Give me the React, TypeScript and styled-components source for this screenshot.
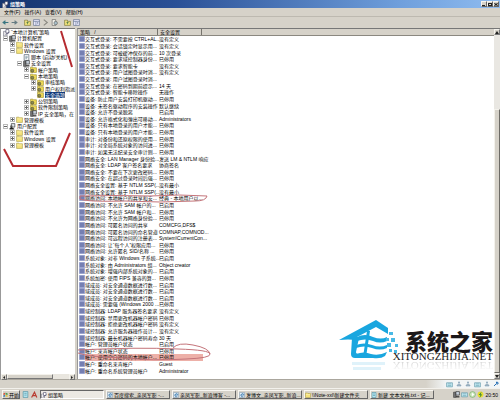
import React from "react";
import styled, { createGlobalStyle } from "styled-components";

const GlobalStyle = createGlobalStyle`
  * { box-sizing: border-box; }
  body { margin: 0; }
  button { font: inherit; color: inherit; border: 0; padding: 0; background: none; }
`;

const Desktop = styled.div`
  display: flex;
  flex-direction: column;
  height: 100vh;
  overflow: hidden;
  background: #d6d2c9;
  color: #000;
  font: 5px/6px "Liberation Sans", "Noto Sans CJK SC", sans-serif;
  white-space: nowrap;
`;

const TitleBar = styled.header`
  display: flex;
  align-items: center;
  justify-content: space-between;
  height: 8px;
  padding: 0 1px 0 2px;
  color: #fff;
  font-weight: bold;
  background: linear-gradient(90deg, #15356f 0%, #2a5096 35%, #6f9fdc 80%, #8fbcf0 100%);
`;

const Group = styled.div<{ $gap?: number }>`
  display: flex;
  align-items: center;
  gap: ${(p) => p.$gap ?? 1}px;
`;

const CaptionButton = styled.button`
  display: grid;
  place-items: center;
  width: 6px;
  height: 6px;
  background: #d6d2c9;
  border: 1px solid;
  border-color: #f6f4ee #666 #666 #f6f4ee;
`;

const MenuBar = styled.nav`
  display: flex;
  align-items: center;
  gap: 4px;
  height: 9px;
  padding-left: 4px;
  border-bottom: 1px solid #bdb9b0;
`;

const Toolbar = styled.div`
  display: flex;
  align-items: center;
  gap: 2px;
  height: 11px;
  padding-left: 2px;
`;

const ToolButton = styled.button<{ $start?: boolean }>`
  display: grid;
  place-items: center;
  width: 7px;
  height: 7px;
  margin-left: ${(p) => (p.$start ? 4 : 0)}px;
`;

const Workspace = styled.main`
  display: grid;
  grid-template-columns: 75px minmax(0, 1fr);
  column-gap: 2px;
  flex: 1;
  min-height: 0;
`;

const Pane = styled.section`
  position: relative;
  display: flex;
  flex-direction: column;
  min-width: 0;
  min-height: 0;
  background: #fff;
  border-top: 1px solid #777;
  border-left: 1px solid #999;
`;

const Tree = styled.ul`
  flex: 1;
  min-height: 0;
  margin: 0;
  padding: 0;
  list-style: none;
  display: grid;
  grid-template-rows: repeat(19, minmax(0, 1fr)) minmax(0, 36fr);
`;

const TreeItem = styled.li<{ $depth: number }>`
  display: flex;
  align-items: center;
  gap: 1px;
  padding-left: ${(p) => p.$depth * 7 + 2}px;
`;

const Expander = styled.button`
  display: grid;
  place-items: center;
  flex: none;
  width: 5px;
  height: 5px;
`;

const TreeLabel = styled.span<{ $selected?: boolean }>`
  color: ${(p) => (p.$selected ? "#fff" : "inherit")};
  background: ${(p) => (p.$selected ? "#123b7a" : "transparent")};
`;

const HScroll = styled.div`
  display: flex;
  justify-content: space-between;
  height: 5px;
  background: #e9e6df;
`;

const Thumb = styled.div`
  flex: 1;
  margin-right: 16px;
  background: #d6d2c9;
  border: 1px solid;
  border-color: #f4f2ec #777 #777 #f4f2ec;
`;

const ScrollButton = styled.button`
  display: grid;
  place-items: center;
  flex: none;
  width: 6px;
  height: 6px;
  background: #d6d2c9;
  border: 1px solid;
  border-color: #f4f2ec #777 #777 #f4f2ec;
`;

const ListBody = styled.div`
  display: grid;
  grid-template-columns: minmax(0, 1fr) 6px;
  flex: 1;
  min-height: 0;
`;

const VScroll = styled.div`
  display: grid;
  grid-template-rows: 6px minmax(0, 28fr) minmax(0, 100fr) 6px;
  background: #e9e7e2;
`;

const VThumb = styled.div`
  background: #d6d2c9;
  border: 1px solid;
  border-color: #f4f2ec #6d6b66 #6d6b66 #f4f2ec;
`;

const Table = styled.table`
  display: flex;
  flex-direction: column;
  min-height: 0;
  padding-bottom: 5px;

  thead { display: block; flex: none; }
  tbody { display: grid; flex: 1; min-height: 0; grid-auto-rows: minmax(0, 1fr); }
`;

const Row = styled.tr<{ $marked?: boolean }>`
  display: grid;
  grid-template-columns: 80px 44px minmax(0, 1fr);
  align-items: center;
  min-height: 0;
  background: ${(p) =>
    p.$marked ? "linear-gradient(90deg, transparent 7px, #edb0a8 7px, #edb0a8 125px, transparent 125px)" : "none"};
`;

const HeaderRow = styled(Row)`
  height: 7px;
  background: #d6d2c9;
  border-bottom: 1px solid #8b8880;
`;

const HeaderCell = styled.th`
  height: 6px;
  padding: 0 0 0 2px;
  font-weight: normal;
  text-align: left;
  border-right: 1px solid #77746d;
`;

const Cell = styled.td`
  display: flex;
  align-items: center;
  padding: 0 0 0 1px;
`;

const Marks = styled.svg`
  position: absolute;
  left: 0;
  top: 0;
  width: 100%;
  height: 100%;
  overflow: visible;
  pointer-events: none;
  fill: none;
`;

const Brand = styled.div`
  position: absolute;
  right: 7px;
  bottom: 3px;
  display: flex;
  align-items: flex-start;
`;

const BrandText = styled.div`
  display: flex;
  flex-direction: column;
  align-items: flex-end;
  margin-left: -6px;
  padding-top: 9px;
`;

const BrandName = styled.strong`
  color: #1b1718;
  font: 900 22px/22px "Noto Sans CJK SC", sans-serif;
`;

const BrandUrl = styled.span<{ $reflected?: boolean }>`
  color: #222;
  font: 11px/10px "Liberation Serif", serif;
  ${(p) =>
    p.$reflected
      ? "transform: scaleY(-1); opacity: 0.2; mask-image: linear-gradient(0deg, #000, transparent);"
      : ""}
`;

const StatusBar = styled.footer`
  display: flex;
  align-items: center;
  justify-content: flex-end;
  height: 9px;
  border-top: 1px solid #aaa69d;
`;

const LanguageBar = styled.div`
  display: flex;
  align-items: center;
  gap: 3px;
  height: 8px;
  padding: 0 1px 0 20px;
  background: linear-gradient(90deg, transparent, #f2f5f6 20px);
`;

const TaskBar = styled.footer`
  display: flex;
  align-items: center;
  gap: 2px;
  height: 12px;
  padding: 1px 2px;
  border-top: 1px solid #f3f1ec;
`;

const TaskButton = styled.button<{ $active?: boolean; $small?: boolean }>`
  display: flex;
  align-items: center;
  gap: 1px;
  flex: ${(p) => (p.$small ? "0 0 auto" : "0 1 64px")};
  min-width: 0;
  height: 9px;
  background: ${(p) => (p.$active ? "#ece9e3" : "#d6d2c9")};
  border: 1px solid;
  border-color: ${(p) => (p.$active ? "#666 #fff #fff #666" : "#f8f6f1 #666 #666 #f8f6f1")};
`;

const Tray = styled.div`
  display: flex;
  align-items: center;
  gap: 1px;
  margin-left: auto;
`;

type IconName =
  | "console" | "folder" | "folderGear" | "page" | "server" | "user" | "policy" | "back" | "forward"
  | "up" | "grid" | "cross" | "export" | "ie" | "note" | "letter" | "windows" | "person" | "keyboard" | "tool" | "bolt" | "shield";

const shapes: Record<IconName, React.ReactNode> = {
  console: <><path d="M1 4h6v8H1z" fill="#eee" stroke="#667" /><path d="M5 1h5v6H5z" fill="#fff" stroke="#335" /><path d="m4 10 7-5" stroke="#446" /></>,
  folder: <><path d="M1 2h4l1 1h5v8H1z" fill="#f5e27a" stroke="#a59742" /><path d="M2 5h8" stroke="#fff7c0" /></>,
  folderGear: <><path d="M1 2h4l1 1h5v8H1z" fill="#f0dc58" stroke="#948522" /><circle cx="4" cy="8" r="2.5" fill="#8e8d50" stroke="#443" /></>,
  page: <><path d="M2 1h8v10H2z" fill="#fff" stroke="#345" /><path d="M4 4h4M4 6h4M4 8h3" stroke="#578" /></>,
  server: <><path d="M1 2h4v9H1z" fill="#777" stroke="#333" /><path d="M5 1h6v6H5z" fill="#c8d1dc" stroke="#222" /><path d="M5 10h6" stroke="#222" strokeWidth="2" /></>,
  user: <><path d="M4 1h6v6H4z" fill="#dde3ea" stroke="#222" /><circle cx="4" cy="6" r="2" fill="#555" /><path d="M1 11V9l3-2 5 3v1z" fill="#222" /></>,
  policy: <><path d="M1 1h10v10H1z" fill="#c9cff0" stroke="#5360a7" /><path d="M3 3h2v2H3zm4 0h2v2H7zM3 7h2v2H3zm4 0h2v2H7z" fill="#394785" stroke="#394785" /></>,
  back: <path d="M11 6H2m4-3L2 6l4 3" stroke="#397581" strokeWidth="2" />,
  forward: <path d="M1 6h9M6 3l4 3-4 3" stroke="#667c83" strokeWidth="2" />,
  up: <><path d="M1 2h5v2h5v7H1z" fill="#eee07d" stroke="#716c31" /><path d="M6 9V5M4 7l2-2 2 2" stroke="#276434" /></>,
  grid: <><path d="M1 1h10v10H1z" fill="#eef" stroke="#536486" /><path d="M1 4h10M5 4v7M7 6h2M7 8h2" stroke="#536486" /></>,
  cross: <path d="m3 1 6 5-6 5" stroke="#8a8881" strokeWidth="2" />,
  export: <><path d="M2 1h6v10H2z" fill="#f6f5ee" stroke="#555" /><circle cx="8" cy="7" r="3" fill="#aac1cb" stroke="#555" /></>,
  ie: <><path d="M1 1h10v10H1z" fill="#e8f1f8" stroke="#7892a8" /><path d="M9 8c-4 4-7-1-4-4 3-2 5 0 4 2H4" stroke="#246ca5" strokeWidth="1.5" /></>,
  note: <><path d="M2 1h8v10H2z" fill="#b9e6f0" stroke="#3a849a" /><path d="M4 4h4M4 7h4" stroke="#3a849a" /></>,
  letter: <path d="m1 11 5-9 4 9M3 8h6" stroke="#b93b30" strokeWidth="2" />,
  windows: <><path d="M1 3l4-1v4l-4 1z" fill="#d94f36" /><path d="M6 2l5 1v4L6 6z" fill="#4b9d51" /><path d="M1 8l4-1v4l-4 1z" fill="#397bb9" /><path d="M6 7l5 1v4l-5-1z" fill="#dfc23e" /></>,
  person: <><circle cx="6" cy="3" r="2" fill="#8fa9bc" /><path d="M2 10c0-5 8-5 8 0z" fill="#a4bac9" stroke="#6e8da4" /></>,
  keyboard: <><path d="M1 3h10v7H1z" fill="#c8eef6" stroke="#558ea1" /><path d="M3 5h6M3 8h6" stroke="#558ea1" /></>,
  tool: <path d="m2 10 5-5V2l3 1v3H7" stroke="#2970b5" strokeWidth="2" />,
  bolt: <><circle cx="6" cy="6" r="5" fill="#e6dd2f" /><path d="m8 1-5 6h3l-2 5 5-6H6z" fill="#257b38" /></>,
  shield: <><circle cx="6" cy="6" r="5" fill="#cbe7bd" stroke="#68a65a" /><path d="M5 3v6l4-3z" fill="#fff" /></>,
};

const Drawing = styled.svg`
  flex: none;
  fill: none;
`;

const Icon = ({ name, size = 7 }: { name: IconName; size?: number }) => (
  <Drawing width={size} height={size} viewBox="0 0 12 12" aria-hidden="true">{shapes[name]}</Drawing>
);

const Arrow = ({ d }: { d: string }) => (
  <Drawing width="4" height="3" viewBox="0 0 4 3" aria-hidden="true"><path d={d} fill="#222" /></Drawing>
);

type Node = { label: string; depth: number; icon: IconName; open?: boolean; selected?: boolean };
const nodes: Node[] = [
  { label: "“本地计算机”策略", depth: 0, icon: "console" },
  { label: "计算机配置", depth: 0, icon: "server", open: true },
  { label: "软件设置", depth: 1, icon: "folder", open: false },
  { label: "Windows 设置", depth: 1, icon: "folder", open: true },
  { label: "脚本 (启动/关机)", depth: 2, icon: "page" },
  { label: "安全设置", depth: 2, icon: "server", open: true },
  { label: "帐户策略", depth: 3, icon: "folderGear", open: false },
  { label: "本地策略", depth: 3, icon: "folderGear", open: true },
  { label: "审核策略", depth: 4, icon: "folderGear", open: false },
  { label: "用户权利指派", depth: 4, icon: "folderGear", open: false },
  { label: "安全选项", depth: 4, icon: "folderGear", selected: true },
  { label: "公钥策略", depth: 3, icon: "folderGear", open: false },
  { label: "软件限制策略", depth: 3, icon: "folderGear", open: false },
  { label: "IP 安全策略，在", depth: 3, icon: "server", open: false },
  { label: "管理模板", depth: 1, icon: "folder", open: false },
  { label: "用户配置", depth: 0, icon: "user", open: true },
  { label: "软件设置", depth: 1, icon: "folder", open: false },
  { label: "Windows 设置", depth: 1, icon: "folder", open: false },
  { label: "管理模板", depth: 1, icon: "folder", open: false },
];

const policies: [string, string][] = [
  ["交互式登录: 不需要按 CTRL+AL...", "没有定义"],
  ["交互式登录: 会话锁定时显示用...", "没有定义"],
  ["交互式登录: 可被缓冲保存的前...", "10 次登录"],
  ["交互式登录: 要求域控制器身份...", "已停用"],
  ["交互式登录: 要求智能卡", "没有定义"],
  ["交互式登录: 用户试图登录时消...", "没有定义"],
  ["交互式登录: 用户试图登录时消...", ""],
  ["交互式登录: 在密码到期前提示...", "14 天"],
  ["交互式登录: 智能卡移除操作", "无操作"],
  ["设备: 防止用户安装打印机驱动...", "已停用"],
  ["设备: 未签名驱动程序的安装操作", "默认继续"],
  ["设备: 允许不登录脱离", "已启用"],
  ["设备: 允许格式化和弹出可移动...", "Administrators"],
  ["设备: 只有本地登录的用户才能...", "已停用"],
  ["设备: 只有本地登录的用户才能...", "已停用"],
  ["审计: 对备份和还原权限的使用...", "已停用"],
  ["审计: 对全局系统对象的访问进...", "已停用"],
  ["审计: 如果无法纪录安全审计则...", "已停用"],
  ["网络安全: LAN Manager 身份验...", "发送 LM & NTLM 响应"],
  ["网络安全: LDAP 客户签名要求", "协商签名"],
  ["网络安全: 不要在下次更改密码...", "已停用"],
  ["网络安全: 在超过登录时间后强...", "已停用"],
  ["网络安全设置: 基于 NTLM SSP(...", "没有最小"],
  ["网络安全设置: 基于 NTLM SSP(...", "没有最小"],
  ["网络访问: 本地帐户的共享和安...", "经典 - 本地用户以..."],
  ["网络访问: 不允许 SAM 帐户的...", "已启用"],
  ["网络访问: 不允许 SAM 帐户和...", "已停用"],
  ["网络访问: 不允许为网络身份验...", "已停用"],
  ["网络访问: 可匿名访问的共享", "COMCFG,DFS$"],
  ["网络访问: 可匿名访问的命名管道", "COMNAP,COMNOD..."],
  ["网络访问: 可远程访问的注册表...", "System\\CurrentCon..."],
  ["网络访问: 让“每个人”权限应用...", "已停用"],
  ["网络访问: 允许匿名 SID/名称 ...", "已停用"],
  ["系统对象: 对非 Windows 子系统...", "已启用"],
  ["系统对象: 由 Administrators 组...", "Object creator"],
  ["系统对象: 增强内部系统对象的...", "已启用"],
  ["系统加密: 使用 FIPS 兼容的算...", "已停用"],
  ["域成员: 对安全通道数据进行数...", "已启用"],
  ["域成员: 对安全通道数据进行数...", "已启用"],
  ["域成员: 对安全通道数据进行数...", "已启用"],
  ["域成员: 需要强 (Windows 2000 ...", "已停用"],
  ["域控制器: LDAP 服务器签名要求", "没有定义"],
  ["域控制器: 禁用更改机器帐户密码", "已停用"],
  ["域控制器: 拒绝更改机器帐户密码", "没有定义"],
  ["域控制器: 允许服务器操作员计...", "没有定义"],
  ["域控制器: 最长机器帐户密码寿命", "30 天"],
  ["帐户: 管理员帐户状态", "已启用"],
  ["帐户: 来宾帐户状态", "已停用"],
  ["帐户: 使用空白密码的本地帐户...", "已停用"],
  ["帐户: 重命名来宾帐户", "Guest"],
  ["帐户: 重命名系统管理员帐户", "Administrator"],
];

const MARKED_ROW = 48;

const tasks: { label: string; icon: IconName; active?: boolean }[] = [
  { label: "组策略", icon: "console", active: true },
  { label: "百度搜索_亲凤军影 -...", icon: "ie" },
  { label: "亲凤军影_新浪博客 -...", icon: "ie" },
  { label: "发博文_亲凤军影_新浪...", icon: "ie" },
  { label: "\\\\Note-xxl\\新建文件夹", icon: "folder" },
  { label: "新建 文本文档.txt - 记...", icon: "note" },
];

const tools: { name: IconName; label: string; start?: boolean }[] = [
  { name: "back", label: "后退" },
  { name: "forward", label: "前进" },
  { name: "up", label: "向上", start: true },
  { name: "grid", label: "显示树" },
  { name: "cross", label: "删除" },
  { name: "export", label: "导出列表" },
  { name: "up", label: "属性", start: true },
  { name: "grid", label: "帮助" },
];

const HouseLogo = () => (
  <Drawing width="60" height="56" viewBox="0 0 60 56" aria-hidden="true">
    <g fill="#19a6df">
      <path d="M0 20 37 0l12 8v6L37 7 18 17v3q-9-1-18 0z" />
      <path d="M13 18h7l-3 14q0 2 3 2h10v4H16q-4 0-4-4z" />
      <path d="M18 17q8-4 16 0 8 3 14 0v4q-7 3-14 0-8-3-16 0z" />
      <path d="M17 25q8-3 16 0 8 3 15 0v3q-7 3-15 0-8-3-16 0z" />
      <path d="M17 34q8-3 15 0 8 2 16-2l-2 4q-4 3-12 2H16z" />
      <path d="M28 11h3l-4 26h-3z" />
    </g>
    <path d="M50 12h4v3h-4zm-3 6h3v3h-3zm5 0h4v4h-4zm-4 5h4v4h-4zm8 1h3v3h-3zm-6 5h3v3h-3zm5 1h3v3h-3z" fill="#49b9e5" />
    <path d="M13 42h33v3H13zm1 5h28v3H14z" fill="#19a6df" opacity=".14" />
  </Drawing>
);

export default function App() {
  return (
    <Desktop>
      <GlobalStyle />
      <TitleBar>
        <Group><Icon name="console" /><span>组策略</span></Group>
        <Group $gap={0}>
          <CaptionButton aria-label="最小化"><Arrow d="M0 2h3v1H0z" /></CaptionButton>
          <CaptionButton aria-label="还原"><Arrow d="M0 0h4v3H0zM1 1v1h2V1z" /></CaptionButton>
          <CaptionButton aria-label="关闭"><Arrow d="M0 0h1l1 1 1-1h1L3 1.500 4 3H3L2 2 1 3H0l1-1.500z" /></CaptionButton>
        </Group>
      </TitleBar>
      <MenuBar>
        {["文件(F)", "操作(A)", "查看(V)", "帮助(H)"].map((m) => <button key={m}>{m}</button>)}
      </MenuBar>
      <Toolbar>
        {tools.map((t) => (
          <ToolButton key={t.label} aria-label={t.label} $start={t.start}><Icon name={t.name} /></ToolButton>
        ))}
      </Toolbar>
      <Workspace>
        <Pane>
          <Tree>
            {nodes.map((n, i) => (
              <TreeItem key={i} $depth={n.depth}>
                {i > 0 && (n.open === undefined ? <Expander as="span" /> : (
                  <Expander aria-label={n.label} aria-expanded={n.open}>
                    <Drawing width="5" height="5" viewBox="0 0 5 5">
                      <path d="M0 0h5v5H0z" fill="#bbb" /><path d="M1 1h3v3H1z" fill="#fff" />
                      <path d={n.open ? "M1 2h3v1H1z" : "M1 2h3v1H1zM2 1h1v3H2z"} fill="#666" />
                    </Drawing>
                  </Expander>
                ))}
                <Icon name={n.icon} />
                <TreeLabel $selected={n.selected}>{n.label}</TreeLabel>
              </TreeItem>
            ))}
          </Tree>
          <HScroll>
            <ScrollButton aria-label="向左"><Arrow d="M3 0v3L1 1.500z" /></ScrollButton>
            <Thumb />
            <ScrollButton aria-label="向右"><Arrow d="M1 0v3l2-1.500z" /></ScrollButton>
          </HScroll>
          <Marks stroke="#b52b30" strokeWidth="2">
            <path d="M60 2 71 38M3 120l9 17h43l14-33" />
          </Marks>
        </Pane>
        <Pane>
          <ListBody>
            <Table>
              <thead>
                <HeaderRow>
                  <HeaderCell>策略 &nbsp; /</HeaderCell>
                  <HeaderCell>安全设置</HeaderCell>
                  <th aria-hidden="true" />
                </HeaderRow>
              </thead>
              <tbody>
                {policies.map(([name, value], i) => (
                  <Row key={i} $marked={i === MARKED_ROW}>
                    <Cell><Icon name="policy" size={6} />{name}</Cell>
                    <Cell>{value}</Cell>
                  </Row>
                ))}
              </tbody>
            </Table>
            <VScroll>
              <ScrollButton aria-label="向上滚动"><Arrow d="M0 3h4L2 0z" /></ScrollButton>
              <div />
              <VThumb />
              <ScrollButton aria-label="向下滚动"><Arrow d="M0 0h4L2 3z" /></ScrollButton>
            </VScroll>
          </ListBody>
          <Brand>
            <HouseLogo />
            <BrandText>
              <BrandName>系统之家</BrandName>
              <BrandUrl>XITONGZHIJIA.NET</BrandUrl>
              <BrandUrl $reflected aria-hidden="true">XITONGZHIJIA.NET</BrandUrl>
            </BrandText>
          </Brand>
          <Marks stroke="#c4747a">
            <path d="M2 167q35-1 70 0 30-2 57 0-1 5-12 5-35 2-70 0-38 1-45-2zM0 321q60-3 100-1 32 1 32 5 1 4-24 5-35 2-60-1-38-1-48-5M95 319q5-6 20-3 16 3 17 9" />
          </Marks>
        </Pane>
      </Workspace>
      <StatusBar>
        <LanguageBar>
          <Icon name="keyboard" /><Icon name="person" size={6} /><Icon name="person" size={6} />
          <Icon name="keyboard" /><Icon name="person" size={6} /><Icon name="tool" size={6} />
        </LanguageBar>
      </StatusBar>
      <TaskBar>
        <TaskButton $small><Icon name="windows" size={5} />开始</TaskButton>
        <Icon name="note" /><Icon name="letter" />
        {tasks.map((t) => (
          <TaskButton key={t.label} $active={t.active}><Icon name={t.icon} size={6} />{t.label}</TaskButton>
        ))}
        <Tray>
          <Icon name="server" /><Icon name="keyboard" /><Icon name="shield" /><Icon name="bolt" />
          <time>20:50</time>
        </Tray>
      </TaskBar>
    </Desktop>
  );
}
